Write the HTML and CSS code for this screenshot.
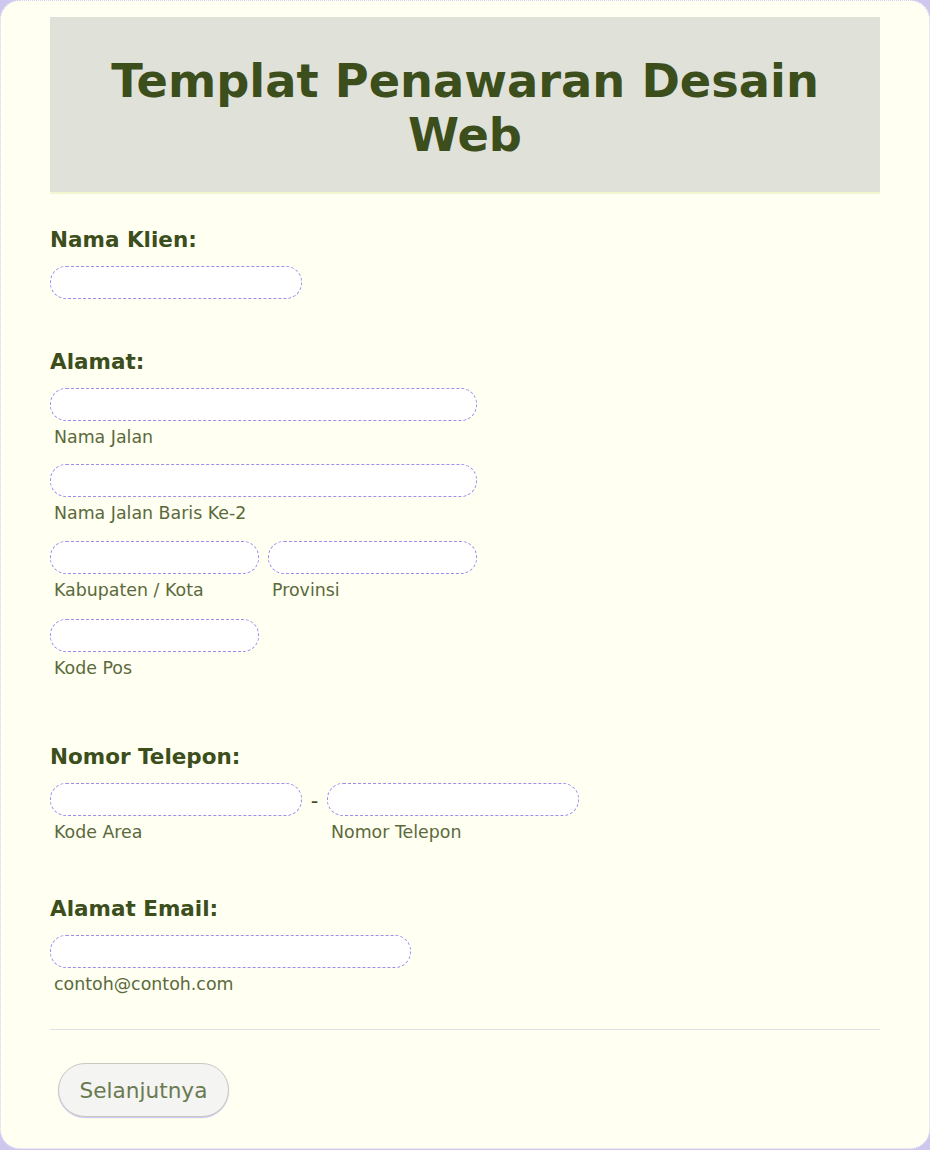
FILE: index.html
```html
<!DOCTYPE html>
<html lang="id">
<head>
    <meta charset="UTF-8">
    <meta name="viewport" content="width=device-width, initial-scale=1.0">
    <title>Templat Penawaran Desain Web</title>
    <link rel="stylesheet" href="styles.css">
</head>
<body>
    <form class="form-card" onsubmit="return false">
        <div class="form-header">
            <h1>Templat Penawaran Desain Web</h1>
        </div>

        <div class="field field-name">
            <label class="field-label" for="clientName">Nama Klien:</label>
            <input type="text" id="clientName" class="text-input input-md">
        </div>

        <div class="field field-address">
            <label class="field-label" for="street1">Alamat:</label>
            <div class="sub-field">
                <input type="text" id="street1" class="text-input input-lg">
                <span class="sub-label">Nama Jalan</span>
            </div>
            <div class="sub-field">
                <input type="text" id="street2" class="text-input input-lg">
                <span class="sub-label">Nama Jalan Baris Ke-2</span>
            </div>
            <div class="sub-row">
                <div class="sub-field">
                    <input type="text" id="city" class="text-input input-sm">
                    <span class="sub-label">Kabupaten / Kota</span>
                </div>
                <div class="sub-field">
                    <input type="text" id="state" class="text-input input-sm">
                    <span class="sub-label">Provinsi</span>
                </div>
            </div>
            <div class="sub-field">
                <input type="text" id="postal" class="text-input input-sm">
                <span class="sub-label">Kode Pos</span>
            </div>
        </div>

        <div class="field field-phone">
            <label class="field-label" for="areaCode">Nomor Telepon:</label>
            <div class="phone-row">
                <div class="sub-field">
                    <input type="text" id="areaCode" class="text-input input-md">
                    <span class="sub-label">Kode Area</span>
                </div>
                <span class="phone-dash">-</span>
                <div class="sub-field">
                    <input type="text" id="phone" class="text-input input-md">
                    <span class="sub-label">Nomor Telepon</span>
                </div>
            </div>
        </div>

        <div class="field field-email">
            <label class="field-label" for="email">Alamat Email:</label>
            <div class="sub-field">
                <input type="text" id="email" class="text-input input-email">
                <span class="sub-label">contoh@contoh.com</span>
            </div>
        </div>

        <div class="form-footer">
            <button type="button" class="next-btn">Selanjutnya</button>
        </div>
    </form>
</body>
</html>
```

FILE: styles.css
```css
body {
    margin: 0;
    background-color: #cec8ee;
    font-family: "DejaVu Sans", Verdana, sans-serif;
}
.form-card {
    background: #fffff2;
    border: 1px dotted #d6d0f4;
    border-radius: 20px;
    padding: 16px 49px 31px;
}
.form-header {
    background: #e0e2d9;
    border-bottom: 2px solid #f3f6cf;
    padding: 37px 20px 30px;
    margin-bottom: 33px;
    text-align: center;
}
.form-header h1 {
    margin: 0;
    color: #3c4e1c;
    font-size: 46.3px;
    line-height: 54px;
    font-weight: bold;
}
.field {
    display: flex;
    flex-direction: column;
    align-items: flex-start;
}
.field-label {
    color: #3c4e1c;
    font-size: 21.5px;
    font-weight: bold;
    line-height: 26px;
    margin-bottom: 13px;
}
.field-name {
    margin-bottom: 50px;
}
.field-address {
    margin-bottom: 66px;
}
.field-phone {
    margin-bottom: 54px;
}
.field-email {
    margin-bottom: 35px;
}
.sub-field {
    display: flex;
    flex-direction: column;
    align-items: flex-start;
}
.field-address .sub-field {
    margin-bottom: 18px;
}
.field-address .field-label + .sub-field {
    margin-bottom: 17px;
}
.field-address .sub-row .sub-field {
    margin-bottom: 19px;
}
.field-address > .sub-field:last-child {
    margin-bottom: 0;
}
.sub-row {
    display: flex;
    gap: 9px;
}
.sub-label {
    color: #5b6a3c;
    font-size: 17.4px;
    line-height: 20px;
    margin: 6px 0 0 4px;
}
.text-input {
    box-sizing: border-box;
    height: 33px;
    padding: 4px 14px;
    border: 1px dashed #9f8ded;
    border-radius: 16px;
    background: #fff;
    font-family: inherit;
    font-size: 16px;
    color: #333;
}
.text-input:focus {
    outline: none;
    border-style: solid;
}
.input-sm {
    width: 209px;
}
.input-md {
    width: 252px;
}
.input-lg {
    width: 427px;
}
.input-email {
    width: 361px;
}
.phone-row {
    display: flex;
    align-items: flex-start;
}
.phone-dash {
    width: 25px;
    text-align: center;
    color: #3c4e1c;
    font-size: 21px;
    line-height: 36px;
}
.form-footer {
    border-top: 1px solid #e0e0e6;
    padding: 33px 8px 0;
}
.next-btn {
    width: 171px;
    height: 54px;
    border: 1px solid #c9c9c2;
    border-radius: 27px;
    background: #f4f4f2;
    box-shadow: 0 1px 1px rgba(130, 120, 240, 0.45);
    color: #6a7a50;
    font-family: inherit;
    font-size: 21.6px;
    cursor: pointer;
}
```
